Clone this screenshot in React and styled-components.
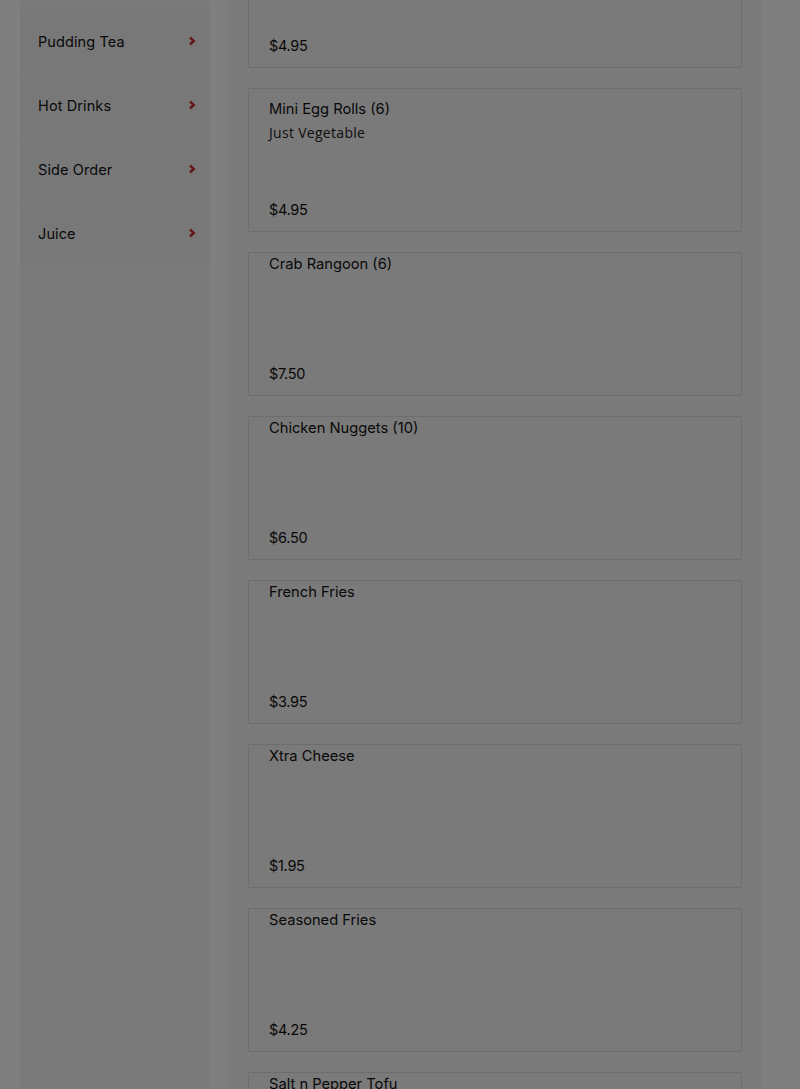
import styled, { createGlobalStyle } from "styled-components";

const GlobalStyle = createGlobalStyle`
  html, body {
    margin: 0;
    padding: 0;
    background: #ffffff;
    height: 100%;
    overflow: hidden;
  }
  * {
    box-sizing: border-box;
  }
`;

const Page = styled.div`
  display: flex;
  align-items: flex-start;
  gap: 18px;
  padding: 0 38px 0 20px;
  height: 1089px;
  overflow: hidden;
  font-family: Inter, "Liberation Sans", sans-serif;
  color: #000;
`;

const Sidebar = styled.nav`
  width: 190px;
  flex-shrink: 0;
  height: 100%;
  background: #f4f4f4;
  padding-top: 10px;
  display: flex;
  flex-direction: column;
`;

const Category = styled.div`
  height: 64px;
  display: flex;
  align-items: center;
  justify-content: space-between;
  padding: 0 14px 0 18px;
  background: #f1f1f1;
  border-bottom: 1px solid #f6f6f6;
  font-size: 14.5px;
  color: #111;
  letter-spacing: 0.1px;
  cursor: pointer;
`;

const Chevron = styled.svg`
  width: 8px;
  height: 10px;
  flex-shrink: 0;
  margin-top: -2px;
`;

const Main = styled.main`
  flex: 1;
  height: 100%;
  background: #f7f7f7;
  padding: 0 20px;
  overflow: hidden;
`;

const CardList = styled.div`
  display: flex;
  flex-direction: column;
  gap: 20px;
  margin-top: -76px;
`;

const Card = styled.div`
  height: 144px;
  flex-shrink: 0;
  border: 1px solid #dadada;
  border-radius: 2px;
  background: #f4f4f4;
  padding: ${({ $withDesc }) => ($withDesc ? "11px" : "2px")} 20px 12px;
  display: flex;
  flex-direction: column;
`;

const Title = styled.div`
  font-size: 14.7px;
  line-height: 18px;
  color: #111;
`;

const Desc = styled.div`
  margin-top: 6px;
  font-family: "Open Sans", "Liberation Sans", sans-serif;
  font-size: 14px;
  line-height: 18px;
  letter-spacing: 0.3px;
  color: #222;
`;

const Price = styled.div`
  margin-top: auto;
  font-size: 14.5px;
  line-height: 18px;
  color: #111;
  letter-spacing: -0.3px;
`;

const Backdrop = styled.div`
  position: fixed;
  inset: 0;
  background: rgba(0, 0, 0, 0.5);
`;

const categories = ["Pudding Tea", "Hot Drinks", "Side Order", "Juice"];

const items = [
  { name: "Egg Rolls (2)", price: "$4.95" },
  { name: "Mini Egg Rolls (6)", desc: "Just Vegetable", price: "$4.95" },
  { name: "Crab Rangoon (6)", price: "$7.50" },
  { name: "Chicken Nuggets (10)", price: "$6.50" },
  { name: "French Fries", price: "$3.95" },
  { name: "Xtra Cheese", price: "$1.95" },
  { name: "Seasoned Fries", price: "$4.25" },
  { name: "Salt n Pepper Tofu", price: "$5.95" }
];

const App = () => {
  return (
    <>
      <GlobalStyle />
      <Page>
        <Sidebar>
          {categories.map((c) => (
            <Category key={c}>
              {c}
              <Chevron viewBox="0 0 8 10">
                <path
                  d="M2 1.5 L5.8 5 L2 8.5"
                  fill="none"
                  stroke="#c0302a"
                  strokeWidth="2.4"
                />
              </Chevron>
            </Category>
          ))}
        </Sidebar>
        <Main>
          <CardList>
            {items.map((item) => (
              <Card key={item.name} $withDesc={!!item.desc}>
                <Title>{item.name}</Title>
                {item.desc && <Desc>{item.desc}</Desc>}
                <Price>{item.price}</Price>
              </Card>
            ))}
          </CardList>
        </Main>
      </Page>
      <Backdrop />
    </>
  );
};

export default App;
